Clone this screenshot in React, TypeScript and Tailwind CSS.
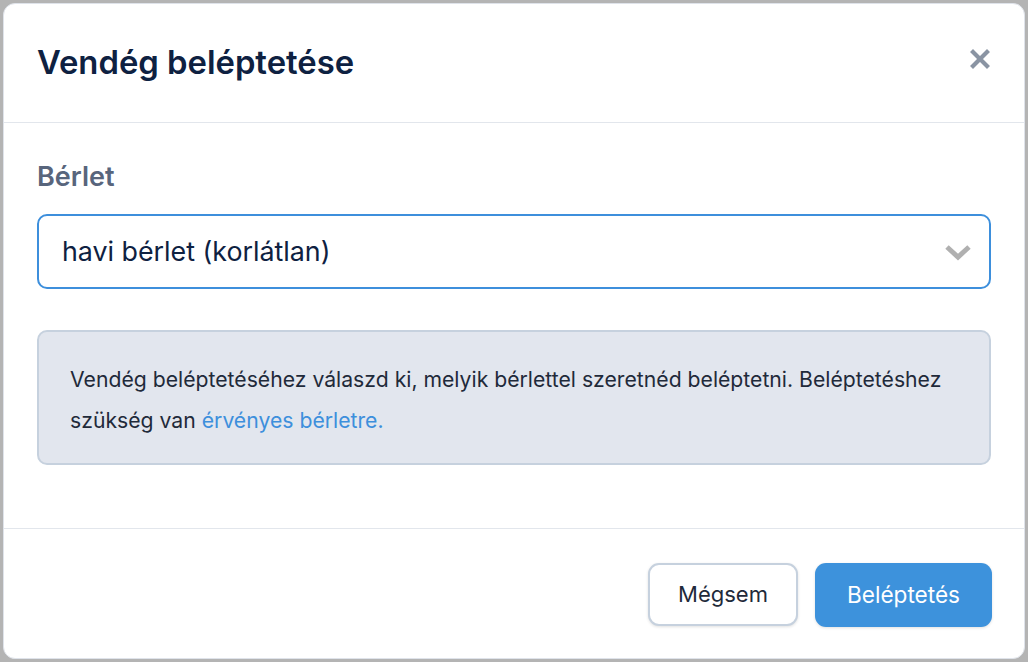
import React from "react";

export default function App() {
  return (
    <div
      className="w-[1028px] h-[662px] bg-[#b4b4b4] p-[3px] overflow-hidden"
      style={{ fontFamily: "Inter, 'Noto Sans', 'Liberation Sans', sans-serif" }}
    >
      <div className="w-full h-full bg-white rounded-[12px] border border-[#dfe3ea] flex flex-col overflow-hidden">
        <div className="h-[119px] shrink-0 flex items-center justify-between pl-[33px] pr-[34px] border-b border-[#e2e6ec]">
          <h1 className="text-[32.8px] font-semibold text-[#0e2141]">Vendég beléptetése</h1>
          <svg width="20" height="20" viewBox="0 0 20 20" className="mt-[-8px]">
            <path d="M3 3 L17 17 M17 3 L3 17" stroke="#8a94a3" strokeWidth="4.2" strokeLinecap="square" />
          </svg>
        </div>
        <div className="flex-1 px-[33px] pt-[38px] pb-0 flex flex-col">
          <div className="text-[27px] leading-[32px] font-semibold text-[#58657c]">Bérlet</div>
          <div className="mt-[21px] h-[75px] rounded-[10px] border-2 border-[#3d8fdc] flex items-center justify-between pl-[23px] pr-[16px]">
            <span className="text-[26.8px] text-[#0e2141]">havi bérlet (korlátlan)</span>
            <svg width="30" height="20" viewBox="0 0 30 20">
              <path d="M4 5 L15 15 L26 5" fill="none" stroke="#b0b0b0" strokeWidth="5" strokeLinejoin="miter" />
            </svg>
          </div>
          <div className="mt-[41px] h-[135px] rounded-[10px] border-2 border-[#c6d1de] bg-[#e2e6ee] px-[31px] pt-[27px]">
            <p className="text-[21.2px] leading-[41px] text-[#1f2a3a] whitespace-nowrap">
              Vendég beléptetéséhez válaszd ki, melyik bérlettel szeretnéd beléptetni. Beléptetéshez
              <br />
              szükség van <span className="text-[#3d8fdc]">érvényes bérletre.</span>
            </p>
          </div>
        </div>
        <div className="h-[130px] shrink-0 border-t border-[#e2e6ec] flex items-center justify-end gap-[17px] pr-[32px] pt-[2px]">
          <button className="w-[150px] h-[63px] rounded-[11px] border-2 border-[#c6d1de] bg-white text-[22px] text-[#1f2a3a] shadow-[0_1px_3px_rgba(0,0,0,0.12)]">
            Mégsem
          </button>
          <button className="w-[177px] h-[64px] rounded-[11px] bg-[#3d92dc] text-[22.6px] text-white shadow-[0_1px_3px_rgba(0,0,0,0.12)]">
            Beléptetés
          </button>
        </div>
      </div>
    </div>
  );
}
